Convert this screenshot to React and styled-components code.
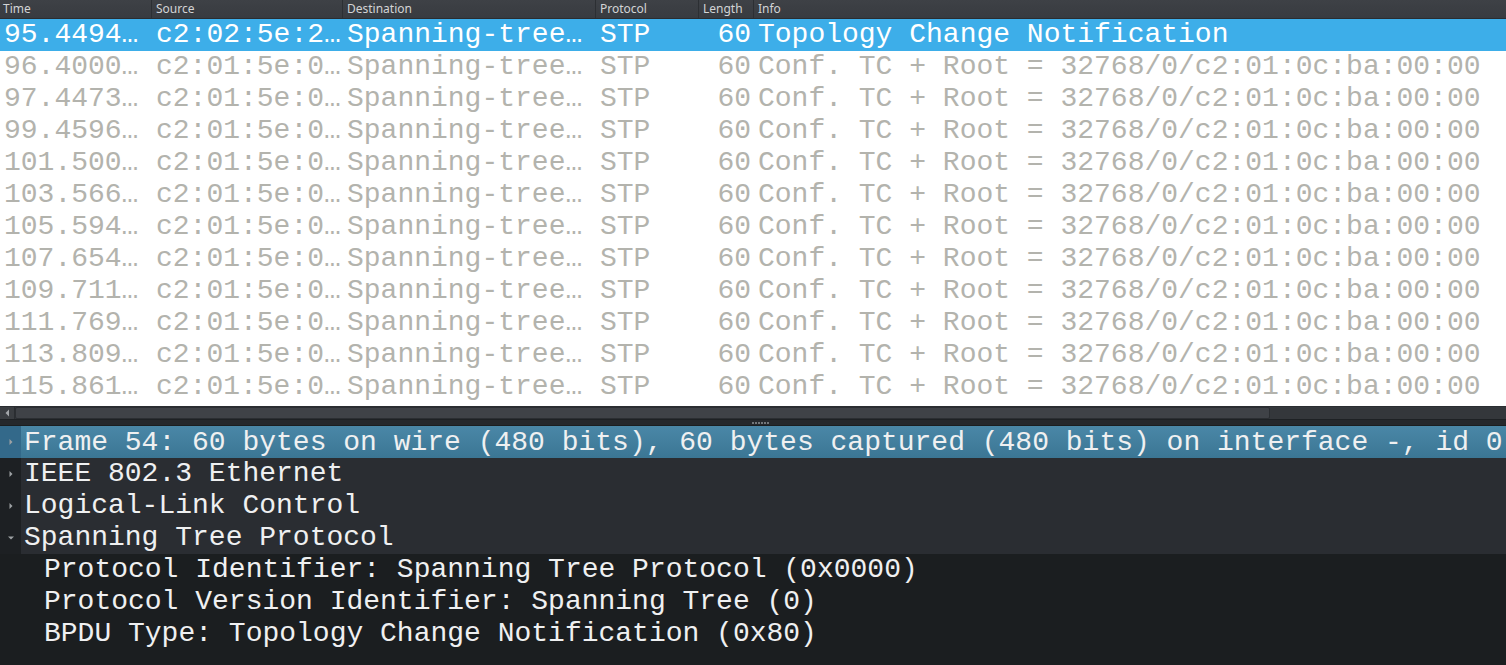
import React from "react";
import styled, { createGlobalStyle } from "styled-components";

const Global = createGlobalStyle`
  html, body { margin: 0; padding: 0; background: #1b1e20; overflow: hidden; }
  #root { width: 1506px; height: 665px; }
`;

const Window = styled.div`
  width: 1506px;
  height: 665px;
  display: flex;
  flex-direction: column;
  background: #1b1e20;
`;

const PacketList = styled.div`
  height: 406px;
  background: #ffffff;
  display: flex;
  flex-direction: column;
  overflow: hidden;
`;

const COLS = "151px 191px 253px 103px 55px 1fr";

const Header = styled.div`
  display: grid;
  grid-template-columns: ${COLS};
  height: 19px;
  box-sizing: border-box;
  background: linear-gradient(#3e4146, #383b40);
  border-bottom: 1px solid #2a2d31;
`;

const HeaderCell = styled.div`
  font-family: "Noto Sans", sans-serif;
  font-size: 12px;
  line-height: 18px;
  color: #d3d4d5;
  padding-left: ${(p) => (p.$first ? "3px" : "4px")};
  border-left: ${(p) => (p.$first ? "none" : "1px solid #2c2f33")};
  white-space: nowrap;
  overflow: hidden;
`;

const Row = styled.div`
  display: grid;
  grid-template-columns: ${COLS};
  height: 32px;
  background: ${(p) => (p.$selected ? "#3daee9" : "#ffffff")};
  color: ${(p) => (p.$selected ? "#ffffff" : "#b3b3ad")};
  font-family: "Liberation Mono", monospace;
  font-size: 28px;
  line-height: 32px;
`;

const Cell = styled.div`
  white-space: nowrap;
  overflow: hidden;
  padding-left: ${(p) => (p.$first ? "4px" : "5px")};
  text-align: ${(p) => (p.$right ? "right" : "left")};
  padding-right: ${(p) => (p.$right ? "2px" : "0")};
`;

const HScroll = styled.div`
  height: 13px;
  box-sizing: border-box;
  border-top: 1px solid #2a2d31;
  background: #34373b;
  display: flex;
  align-items: stretch;
`;

const ScrollButton = styled.div`
  width: 14px;
  display: flex;
  align-items: center;
  justify-content: center;
  background: #3a3d41;
  border-right: 1px solid #2a2d31;
`;

const ScrollHandle = styled.div`
  width: 1255px;
  box-sizing: border-box;
  background: #3f4247;
  border: 1px solid #2b2e32;
  border-radius: 2px;
`;

const Splitter = styled.div`
  height: 6px;
  background: #25282c;
  border-top: 1px solid #1e2124;
  box-sizing: border-box;
  display: flex;
  align-items: center;
  justify-content: center;
  gap: 1px;
  padding-left: 14px;
`;

const Dot = styled.span`
  width: 2px;
  height: 2px;
  background: #72767a;
`;

const Tree = styled.div`
  flex: 1;
  background: #1b1e20;
  font-family: "Liberation Mono", monospace;
  font-size: 28px;
  color: #eff0f1;
  display: flex;
  flex-direction: column;
  padding-top: 1px;
`;

const TreeRow = styled.div`
  display: flex;
  height: 32px;
  line-height: 32px;
  background: ${(p) =>
    p.$selected ? "#33698a" : p.$top ? "#1d2023" : "#1b1e20"};
`;

const Branch = styled.div`
  width: 21px;
  flex: none;
  display: flex;
  align-items: center;
  justify-content: center;
`;

const Label = styled.div`
  flex: 1;
  white-space: nowrap;
  overflow: hidden;
  box-sizing: border-box;
  padding-left: ${(p) => 3 + p.$depth * 20}px;
  padding-top: ${(p) => (p.$selected ? "1px" : "0")};
  background: ${(p) =>
    p.$selected
      ? "linear-gradient(#4a87a7, #3b7694)"
      : p.$top
      ? "#2a2d32"
      : "transparent"};
`;

const Arrow = ({ open }) =>
  open ? (
    <svg width="8" height="6" viewBox="0 0 8 6">
      <path d="M1 1.5 L7 1.5 L4 4.5 Z" fill="#9ea1a4" />
    </svg>
  ) : (
    <svg width="6" height="8" viewBox="0 0 6 8">
      <path d="M1.5 1 L4.5 4 L1.5 7 Z" fill="#9ea1a4" />
    </svg>
  );

const times = [
  "95.4494…", "96.4000…", "97.4473…", "99.4596…", "101.500…", "103.566…",
  "105.594…", "107.654…", "109.711…", "111.769…", "113.809…", "115.861…",
];

const packets = times.map((t, i) =>
  i === 0
    ? { t, src: "c2:02:5e:2…", dst: "Spanning-tree…", proto: "STP", len: "60", info: "Topology Change Notification" }
    : { t, src: "c2:01:5e:0…", dst: "Spanning-tree…", proto: "STP", len: "60", info: "Conf. TC + Root = 32768/0/c2:01:0c:ba:00:00" }
);

const treeItems = [
  { text: "Frame 54: 60 bytes on wire (480 bits), 60 bytes captured (480 bits) on interface -, id 0", depth: 0, arrow: "closed", selected: true },
  { text: "IEEE 802.3 Ethernet", depth: 0, arrow: "closed" },
  { text: "Logical-Link Control", depth: 0, arrow: "closed" },
  { text: "Spanning Tree Protocol", depth: 0, arrow: "open" },
  { text: "Protocol Identifier: Spanning Tree Protocol (0x0000)", depth: 1 },
  { text: "Protocol Version Identifier: Spanning Tree (0)", depth: 1 },
  { text: "BPDU Type: Topology Change Notification (0x80)", depth: 1 },
];

export default function App() {
  return (
    <Window>
      <Global />
      <PacketList>
        <Header>
          <HeaderCell $first>Time</HeaderCell>
          <HeaderCell>Source</HeaderCell>
          <HeaderCell>Destination</HeaderCell>
          <HeaderCell>Protocol</HeaderCell>
          <HeaderCell>Length</HeaderCell>
          <HeaderCell>Info</HeaderCell>
        </Header>
        {packets.map((p, i) => (
          <Row key={i} $selected={i === 0}>
            <Cell $first>{p.t}</Cell>
            <Cell>{p.src}</Cell>
            <Cell>{p.dst}</Cell>
            <Cell>{p.proto}</Cell>
            <Cell $right>{p.len}</Cell>
            <Cell>{p.info}</Cell>
          </Row>
        ))}
      </PacketList>
      <HScroll>
        <ScrollButton>
          <svg width="5" height="8" viewBox="0 0 5 8">
            <path d="M4 0.5 L0.5 4 L4 7.5 Z" fill="#a3a6a9" />
          </svg>
        </ScrollButton>
        <ScrollHandle />
      </HScroll>
      <Splitter>
        {[0, 1, 2, 3, 4, 5].map((i) => (
          <Dot key={i} />
        ))}
      </Splitter>
      <Tree>
        {treeItems.map((it, i) => {
          const top = it.depth === 0 && !it.selected;
          return (
            <TreeRow key={i} $selected={it.selected} $top={top}>
              <Branch>{it.arrow && <Arrow open={it.arrow === "open"} />}</Branch>
              <Label $depth={it.depth} $selected={it.selected} $top={top}>
                {it.text}
              </Label>
            </TreeRow>
          );
        })}
      </Tree>
    </Window>
  );
}
